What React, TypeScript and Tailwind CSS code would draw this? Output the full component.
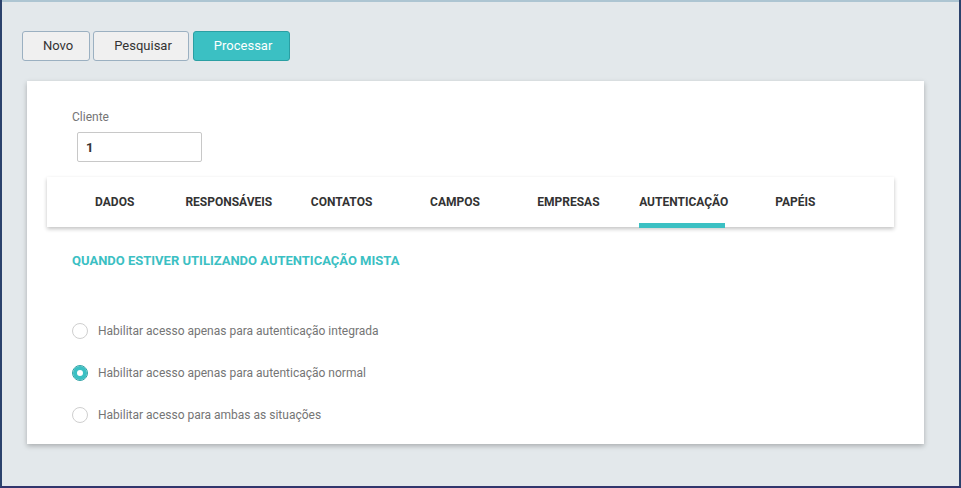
import { useState } from "react";

const tabs = ["DADOS", "RESPONSÁVEIS", "CONTATOS", "CAMPOS", "EMPRESAS", "AUTENTICAÇÃO", "PAPÉIS"];

const options = [
  { id: "integrada", label: "Habilitar acesso apenas para autenticação integrada" },
  { id: "normal", label: "Habilitar acesso apenas para autenticação normal" },
  { id: "ambas", label: "Habilitar acesso para ambas as situações" },
];

const buttonBase = "h-[30px] rounded-[3px] border pl-5 text-[13px] leading-4";

export default function App() {
  const [tab, setTab] = useState("AUTENTICAÇÃO");
  const [mode, setMode] = useState("normal");

  return (
    <div className="flex min-h-screen flex-col border-x-2 border-b-2 border-x-[#2b426c] border-b-[#32356d] font-['Roboto',sans-serif]">
      <main className="grow border-t-2 border-[#adc5d2] bg-[#e3e8eb] pt-[29px] pr-[35px] pb-10 pl-5">
        <div className="flex gap-[3px]">
          <button type="button" className={`${buttonBase} border-[#9bb0c1] bg-[#f0f0f0] pr-4 text-[#333]`}>
            Novo
          </button>
          <button type="button" className={`${buttonBase} border-[#9bb0c1] bg-[#f0f0f0] pr-4 text-[#333]`}>
            Pesquisar
          </button>
          <button type="button" className={`${buttonBase} ml-px border-[#2a9fa3] bg-[#3bc0c3] pr-[17px] text-white`}>
            Processar
          </button>
        </div>

        <section className="mt-5 ml-[5px] bg-white px-5 pt-7 pb-[21px] shadow-[0_2px_5px_rgba(0,0,0,0.26)]">
          <div className="mr-2.5">
            <div className="flex flex-col items-start pl-[25px]">
              <label htmlFor="cliente" className="text-[12px] leading-4 text-[#757575]">
                Cliente
              </label>
              <input
                id="cliente"
                type="text"
                defaultValue="1"
                className="mt-[7px] ml-[5px] h-[30px] w-[125px] rounded-[2px] border border-[#c8c8c8] bg-white px-2 text-[13px] font-bold text-[#333] outline-none"
              />
            </div>

            <nav role="tablist" className="mt-[15px] grid grid-cols-7 pr-7 pl-[25px] shadow-[0_2px_4px_rgba(0,0,0,0.24)]">
              {tabs.map((name) => (
                <button
                  key={name}
                  type="button"
                  role="tab"
                  aria-selected={tab === name}
                  onClick={() => setTab(name)}
                  className={`mr-7 -mb-px flex h-[51px] min-w-0 border-b-[5px] text-[12px] leading-4 font-bold whitespace-nowrap text-[#333] ${
                    tab === name ? "border-[#3bc0c3]" : "border-transparent"
                  }`}
                >
                  <span className="mx-auto pt-[17px]">{name}</span>
                </button>
              ))}
            </nav>

            <div className="pl-[25px]">
              <h2 className="mt-[26px] text-[13px] leading-4 font-bold text-[#3bc0c3]">
                QUANDO ESTIVER UTILIZANDO AUTENTICAÇÃO MISTA
              </h2>
              <div role="radiogroup" aria-label="Autenticação mista" className="mt-[54px] flex flex-col gap-[26px]">
                {options.map((o) => (
                  <label key={o.id} className="flex items-center gap-2.5 text-[12px] leading-4 text-[#757575]">
                    <input
                      type="radio"
                      name="modo"
                      value={o.id}
                      checked={mode === o.id}
                      onChange={() => setMode(o.id)}
                      className="size-4 shrink-0 appearance-none rounded-full border border-[#cfcfcf] bg-white checked:border-[#2fa3a6] checked:shadow-[inset_0_0_0_4px_#3bc0c3]"
                    />
                    {o.label}
                  </label>
                ))}
              </div>
            </div>
          </div>
        </section>
      </main>
    </div>
  );
}
